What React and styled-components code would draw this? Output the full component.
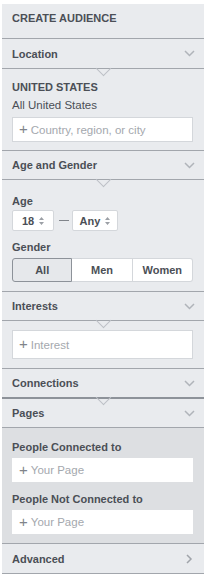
import React from "react";
import styled, { createGlobalStyle } from "styled-components";

const COLORS = {
  panel: "#e9ebee",
  panelDark: "#dddfe2",
  line: "#a2a6ac",
  notch: "#bcc0c6",
  text: "#4b4f56",
  muted: "#a4a8ae",
  plus: "#80848a",
  field: "#d4d7db",
};

const GlobalStyle = createGlobalStyle`
  html, body {
    margin: 0;
    padding: 0;
    background: #ffffff;
  }
  body {
    font-family: "Liberation Sans", Arial, sans-serif;
    -webkit-font-smoothing: antialiased;
  }
`;

const Panel = styled.div`
  margin: 4px 0 0 2px;
  width: 202px;
  background: ${COLORS.panel};
  color: ${COLORS.text};
`;

const Title = styled.div`
  height: 35px;
  box-sizing: border-box;
  padding: 8px 10px 0;
  font-size: 11px;
  line-height: 13px;
  font-weight: 700;
  border-bottom: 1px solid ${COLORS.line};
`;

// height includes the bottom border
const Header = styled.div`
  position: relative;
  height: ${(p) => p.$h || 30}px;
  box-sizing: border-box;
  display: flex;
  align-items: center;
  justify-content: space-between;
  padding: 0 9px 0 10px;
  font-size: 11px;
  font-weight: 700;
  border-bottom: ${(p) => (p.$thick ? 2 : 1)}px solid
    ${(p) => (p.$thick ? "#8d9299" : COLORS.line)};
`;

const Notch = styled.span`
  position: absolute;
  left: 96px;
  top: calc(100% - 5px);
  width: 11px;
  height: 11px;
  box-sizing: border-box;
  border-right: 1px solid ${COLORS.notch};
  border-bottom: 1px solid ${COLORS.notch};
  transform: rotate(45deg);
  z-index: 1;
`;

const Section = styled.div`
  padding: ${(p) => p.$pad || "10px 11px 9px 10px"};
  background: ${(p) => (p.$dark ? COLORS.panelDark : "transparent")};
  border-bottom: 1px solid ${COLORS.line};
`;

const Label = styled.div`
  font-size: 11px;
  line-height: 14px;
  font-weight: 700;
  margin-top: ${(p) => p.$mt || 0}px;
`;

const Plain = styled.div`
  font-size: 11.5px;
  line-height: 14px;
  margin-top: 4px;
`;

const Field = styled.div`
  margin-top: ${(p) => p.$mt || 0}px;
  height: ${(p) => p.$h || 25}px;
  box-sizing: border-box;
  background: #fff;
  border: 1px solid ${(p) => (p.$bare ? "#fff" : COLORS.field)};
  display: flex;
  align-items: center;
  padding-left: 6px;
  gap: 3px;
  font-size: 11.5px;
  color: ${COLORS.muted};
`;

const Plus = styled.span`
  color: ${COLORS.plus};
  font-size: 15px;
  line-height: 1;
  margin-top: -2px;
`;

const AgeRow = styled.div`
  margin-top: 2px;
  display: flex;
  align-items: center;
`;

const Select = styled.div`
  width: ${(p) => p.$w}px;
  height: 21px;
  box-sizing: border-box;
  background: #fff;
  border: 1px solid ${COLORS.field};
  border-radius: 2px;
  display: flex;
  align-items: center;
  justify-content: center;
  gap: 5px;
  font-size: 11px;
  font-weight: 700;
`;

const Dash = styled.span`
  width: 10px;
  height: 1px;
  background: #80848a;
  margin: 0 3px 0 5px;
`;

const Segments = styled.div`
  margin-top: 4px;
  display: grid;
  grid-template-columns: 1fr 1fr 1fr;
  height: 24px;
`;

const Segment = styled.div`
  display: flex;
  align-items: center;
  justify-content: center;
  font-size: 11px;
  font-weight: 700;
  background: ${(p) => (p.$active ? "#e6e8eb" : "#fff")};
  border: 1px solid ${(p) => (p.$active ? "#8d9299" : COLORS.field)};
  border-left-width: ${(p) => (p.$first || p.$active ? 1 : 0)}px;
  border-radius: ${(p) =>
    p.$first ? "3px 0 0 3px" : p.$last ? "0 3px 3px 0" : "0"};
  ${(p) => p.$active && "position: relative; z-index: 1;"}
`;

const Chevron = ({ right }) =>
  right ? (
    <svg width="8" height="10" viewBox="0 0 8 10" style={{ marginRight: 2 }}>
      <polyline points="2,1 6,5 2,9" fill="none" stroke="#a0a4aa" strokeWidth="1.5" />
    </svg>
  ) : (
    <svg width="11" height="7" viewBox="0 0 11 7">
      <polyline points="1,1 5.5,5.5 10,1" fill="none" stroke="#b0b4ba" strokeWidth="1.5" />
    </svg>
  );

const SortIcon = () => (
  <svg width="5" height="8" viewBox="0 0 5 8">
    <path d="M2.5 0 L5 3 L0 3 Z M0 5 L5 5 L2.5 8 Z" fill="#9ca0a6" />
  </svg>
);

const AddField = ({ text, ...rest }) => (
  <Field {...rest}>
    <Plus>+</Plus>
    {text}
  </Field>
);

const App = () => {
  return (
    <>
      <GlobalStyle />
      <Panel>
        <Title>CREATE AUDIENCE</Title>

        {/* Location */}
        <Header $h={30}>
          Location
          <Chevron />
          <Notch />
        </Header>
        <Section $pad="11px 11px 8px 10px">
          <Label>UNITED STATES</Label>
          <Plain>All United States</Plain>
          <AddField text="Country, region, or city" $mt={5} />
        </Section>

        {/* Age and Gender */}
        <Header $h={29}>
          Age and Gender
          <Chevron />
          <Notch />
        </Header>
        <Section $pad="14px 11px 9px 10px">
          <Label>Age</Label>
          <AgeRow>
            <Select $w={42}>
              18 <SortIcon />
            </Select>
            <Dash />
            <Select $w={46}>
              Any <SortIcon />
            </Select>
          </AgeRow>
          <Label $mt={9}>Gender</Label>
          <Segments>
            <Segment $first $active>All</Segment>
            <Segment>Men</Segment>
            <Segment $last>Women</Segment>
          </Segments>
        </Section>

        {/* Interests */}
        <Header $h={29}>
          Interests
          <Chevron />
          <Notch />
        </Header>
        <Section $pad="9px 11px 9px 10px">
          <AddField text="Interest" $h={29} />
        </Section>

        {/* Connections */}
        <Header $h={30} $thick>
          Connections
          <Chevron />
          <Notch />
        </Header>
        <Header $h={29}>
          Pages
          <Chevron />
        </Header>
        <Section $dark $pad="12px 11px 9px 10px">
          <Label>People Connected to</Label>
          <AddField text="Your Page" $mt={4} $h={24} $bare />
          <Label $mt={10}>People Not Connected to</Label>
          <AddField text="Your Page" $mt={4} $h={24} $bare />
        </Section>

        <Header $h={30}>
          Advanced
          <Chevron right />
        </Header>
      </Panel>
    </>
  );
};

export default App;
